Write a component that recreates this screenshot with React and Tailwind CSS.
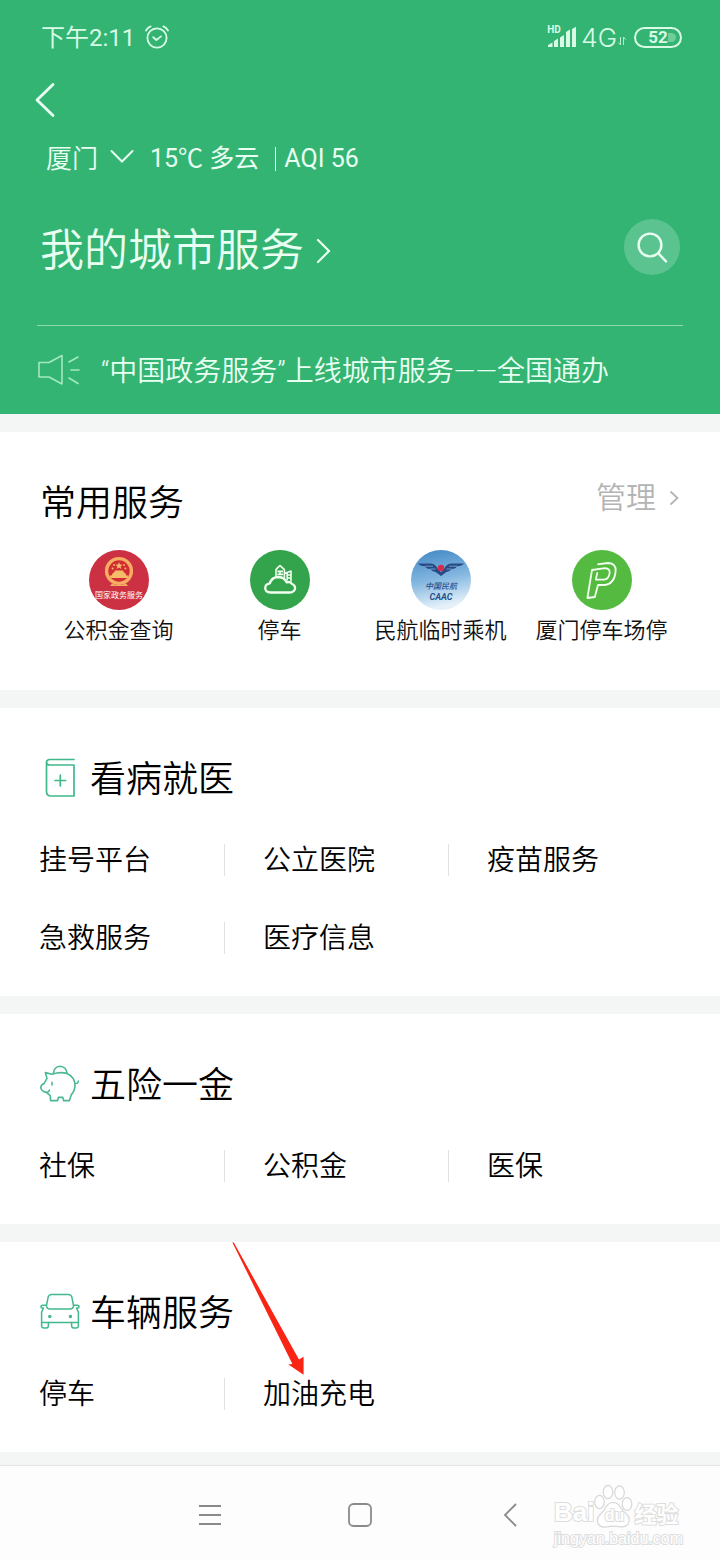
import React, { useState } from 'react';

const medical = ['挂号平台', '公立医院', '疫苗服务', '急救服务', '医疗信息'];
const insurance = ['社保', '公积金', '医保'];
const vehicle = ['停车', '加油充电'];

function AlarmIcon() {
  return (
    <svg className="w-6 h-6" viewBox="0 0 24 24" fill="none" stroke="currentColor" strokeWidth="1.8" strokeLinecap="round" strokeLinejoin="round">
      <circle cx="12" cy="13" r="9.6" />
      <path d="M1 5.5Q2.6 2.6 5.6 1.4M18.4 1.4Q21.4 2.6 23 5.5M8.2 12.2L11.4 15L16 11.4" />
    </svg>
  );
}

function StatusBar() {
  return (
    <div className="h-[74px] pl-[41px] pr-[38px] flex items-center justify-between text-[#d9fbe6]">
      <div className="flex items-center gap-[10px]">
        <span className="pt-[2px] text-[24px] leading-8 font-normal">下午2:11</span>
        <AlarmIcon />
      </div>
      <div className="flex items-center">
        <div className="relative w-[30px] h-6">
          <span className="absolute left-0 top-0 text-[10px] leading-[10px] font-bold">HD</span>
          <svg className="w-[30px] h-6" viewBox="0 0 30 24" fill="currentColor">
            <path d="M1 22V20L5.5 17.4V22ZM7 22V16L11 13.6V22ZM13 22V12.5L17 10V22ZM19 22V7L23 4.6V22ZM25 22V4L29 1.8V22Z" />
          </svg>
        </div>
        <span className="ml-1 pt-[2px] text-[26px] leading-8 font-['Inter'] font-light">4G</span>
        <svg className="ml-px mt-2 w-2 h-2" viewBox="0 0 8 8" fill="none" stroke="currentColor" strokeWidth="1" opacity="0.8">
          <path d="M2.5 0V8L0.5 5.5M5.5 8V0L7.5 2.5" />
        </svg>
        <div className="relative ml-2 w-12 h-[21px] rounded-full border-2 border-current flex items-center justify-center overflow-hidden">
          <span className="absolute left-8 top-1 bottom-1 right-1 rounded-r-full bg-[#d9fbe6]/35" />
          <span className="relative text-[17px] leading-5 font-bold">52</span>
        </div>
      </div>
    </div>
  );
}

function NationalBadge() {
  return (
    <svg className="w-[60px] h-[60px]" viewBox="0 0 60 60">
      <circle cx="30" cy="30" r="30" fill="#cb3142" />
      <circle cx="30" cy="21" r="12.4" fill="#d22c35" stroke="#f4ad62" strokeWidth="3.4" />
      <path d="M23 33.6Q30 36.6 37 33.6L39 36H21Z" fill="#f4ad62" />
      <path d="M20.6 25.4H39.4L38.4 28H21.6ZM24 22.8H36L37.4 25.4H22.6ZM26 20.6H34L35 22.8H25Z" fill="#f6bd68" />
      <path d="M30 12.2L31 14.6L33.6 14.8L31.6 16.4L32.3 19L30 17.6L27.7 19L28.4 16.4L26.4 14.8L29 14.6Z" fill="#f6bd68" />
      <circle cx="23.6" cy="18.6" r="1" fill="#f6bd68" />
      <circle cx="36.4" cy="18.6" r="1" fill="#f6bd68" />
      <circle cx="25" cy="15" r="0.9" fill="#f6bd68" />
      <circle cx="35" cy="15" r="0.9" fill="#f6bd68" />
      <text x="30" y="48" textAnchor="middle" fontSize="8" fontWeight="400" fill="#fff">国家政务服务</text>
    </svg>
  );
}

function CloudBadge() {
  return (
    <svg className="w-[60px] h-[60px]" viewBox="0 0 60 60" fill="none" stroke="#f1fff0" strokeWidth="2.3" strokeLinejoin="round">
      <circle cx="30" cy="30" r="30" fill="#33a44b" stroke="none" />
      <path d="M20.5 42.5Q15.2 42.2 15.2 38Q15.4 34 19.8 33.4Q21.6 27 28.6 27Q34.6 27.4 36.6 32.4Q40.4 31 42 34Q45.6 35.4 45 38.8Q44 42.4 40 42.5Z" />
      <path d="M26 26.6V19.6L28 17.4L30 15.6L32 17.4L34.4 19.6V27.8M27.4 21.4H33M27.4 24.4H33M30 21V25" strokeWidth="1.6" />
      <path d="M34.6 23.6L37 22.6M37.2 30.6V22.4L41 21V31.6M37.6 25H40.6M37.6 28H40.6" strokeWidth="1.6" />
    </svg>
  );
}

function CaacBadge() {
  return (
    <svg className="w-[60px] h-[60px]" viewBox="0 0 60 60">
      <defs>
        <linearGradient id="sky" x1="0" y1="0" x2="0.2" y2="1">
          <stop offset="0" stopColor="#3f86c4" />
          <stop offset="0.55" stopColor="#84b7e0" />
          <stop offset="1" stopColor="#e4f0fa" />
        </linearGradient>
      </defs>
      <circle cx="30" cy="30" r="30" fill="url(#sky)" />
      <path d="M7 13.4H20Q25 14 27 19.2L30 22.2L33 19.2Q35 14 40 13.4H53Q51 16 46 16.2Q45 18.6 40.6 19Q39 21.6 35.4 22L30 26L24.6 22Q21 21.6 19.4 19Q15 18.6 14 16.2Q9 16 7 13.4Z" fill="#294b84" />
      <path d="M14 16.2H22M19.4 19H24.6M46 16.2H38M40.6 19H35.4" stroke="#7fb0dc" strokeWidth="0.8" />
      <circle cx="30" cy="18" r="3.2" fill="#d62b4c" />
      <text x="30" y="39" textAnchor="middle" fontSize="8" fontStyle="italic" fontWeight="500" fill="#28508c">中国民航</text>
      <text x="30" y="50" textAnchor="middle" fontSize="9" fontStyle="italic" fontWeight="700" fill="#28508c">CAAC</text>
    </svg>
  );
}

function ParkingBadge() {
  return (
    <svg className="w-[60px] h-[60px]" viewBox="0 0 60 60" fill="none" stroke="#f3fff0" strokeWidth="1.8" strokeLinejoin="round">
      <circle cx="30" cy="30" r="30" fill="#54bb40" stroke="none" />
      <path d="M25.4 14.4L36 13Q44.6 13.4 43.6 21.4Q42.6 33.6 33 35H26L22.8 47L15.4 48L20 20L33 18.2Q38.4 18.6 37.6 23.4Q36.6 29.4 32 29.6H23.8L25.4 22.4" />
    </svg>
  );
}

const common = [
  { label: '公积金查询', Icon: NationalBadge },
  { label: '停车', Icon: CloudBadge },
  { label: '民航临时乘机', Icon: CaacBadge },
  { label: '厦门停车场停', Icon: ParkingBadge },
];

function BookIcon() {
  return (
    <svg className="w-10 h-10" viewBox="0 0 40 40" fill="none" stroke="#3fb98a" strokeWidth="1.7" strokeLinecap="round" strokeLinejoin="round">
      <path d="M34 1.5H10Q6.5 1.5 6.5 4.2Q6.5 7 10 7H34V38H11Q6.5 38 6.5 33.6V4.2M15 22.5H25.6M20.3 17.2V27.8" />
    </svg>
  );
}

function PiggyIcon() {
  return (
    <svg className="w-10 h-10" viewBox="0 0 40 40" fill="none" stroke="#4bb893" strokeWidth="1.6" strokeLinecap="round" strokeLinejoin="round">
      <path d="M13.4 9.4Q14 2.6 20 2.2Q26.4 2.6 27 9.4" />
      <path d="M5.4 8.6L12 10.2Q20 7.6 27 9.4Q35 13 35 21.4Q34.8 27 31.4 30.6L29.4 36.6H23.6L22.8 33.4H18.4L17.6 36.6H10.6L10.2 31.6L6.4 28.4Q1.4 27.4 0.8 23.6Q1 20.8 4 19.6L7 14.4Z" />
      <path d="M34.8 19.2Q38 20.2 38.4 17M6 28.2Q9 28.6 9.4 26M12 18.4V21" />
    </svg>
  );
}

function CarIcon() {
  return (
    <svg className="w-10 h-10" viewBox="0 0 40 40" fill="none" stroke="#41b98c" strokeWidth="1.5" strokeLinecap="round" strokeLinejoin="round">
      <path d="M11.4 2.6H28.6Q31 2.8 31.8 4.8L33.6 14Q33.2 17 30 17H10Q6.8 17 6.4 14L8.2 4.8Q9 2.8 11.4 2.6Z" />
      <path d="M6 13.2H2.6Q0.8 13.4 1 15.2Q1.4 16.4 3.4 16L1.6 20.4V30.4H38.4V20.4L36.6 16Q38.6 16.4 39 15.2Q39.2 13.4 37.4 13.2H34" />
      <path d="M1.6 30.4V34Q1.8 36 4 36H6.4Q8.4 35.8 8.4 33.8V30.4M31.6 30.4V33.8Q31.6 35.8 33.6 36H36Q38.2 36 38.4 34V30.4" />
      <circle cx="9.8" cy="24.4" r="1" fill="#41b98c" />
      <circle cx="30.4" cy="24.4" r="1" fill="#41b98c" />
    </svg>
  );
}

function ServiceSection({ title, icon, items, children }) {
  return (
    <section className="relative bg-white pt-[50px] pb-[19px]">
      <h2 className="pl-10 h-10 flex items-center gap-[10px] text-[36px] leading-10 text-black">
        {icon}
        <span className="pt-1">{title}</span>
      </h2>
      <ul className="mt-[23px] pr-12 grid grid-cols-3">
        {items.map((item, i) => (
          <li key={item} className="relative h-[78px] flex items-center">
            <a href="#" className="pl-[39px] pt-[2px] text-[28px] leading-10 text-black">{item}</a>
            {i % 3 !== 2 && !(i === items.length - 1) && (
              <span className="absolute -right-px w-px h-8 bg-[#e2e2e2]" />
            )}
          </li>
        ))}
      </ul>
      {children}
    </section>
  );
}

function Watermark() {
  return (
    <div className="absolute right-[38px] top-4 w-32 text-white select-none whitespace-nowrap [paint-order:stroke_fill] [-webkit-text-stroke:2px_#dedede] font-['Liberation_Sans',sans-serif]">
      <div className="h-12 flex items-end font-bold text-[26px] leading-9">
        <span>Bai</span>
        <div className="relative w-10 h-12 shrink-0">
          <svg className="w-10 h-12 [paint-order:normal]" viewBox="0 0 40 48" fill="#fff" stroke="#d8d8d8" strokeWidth="1.2">
            <ellipse cx="5.5" cy="20" rx="4.8" ry="6.6" />
            <ellipse cx="14" cy="10" rx="4.8" ry="6.6" />
            <ellipse cx="25.5" cy="10.5" rx="4.8" ry="6.6" />
            <ellipse cx="33" cy="22" rx="4.8" ry="6.4" />
            <path d="M19 20.5Q24 20.5 26.5 25.5Q29 29.5 33 32.5Q37 37 34 42Q31 46 25 44.6Q19 43.4 13 44.8Q6 46 4 41.6Q2 36 6.6 32Q10 29 12 25Q14.6 20.6 19 20.5Z" />
          </svg>
          <span className="absolute inset-x-0 bottom-1 text-center text-[16px] leading-5">du</span>
        </div>
        <span className="font-['Noto_Sans_CJK_SC',sans-serif] text-[22px]">经验</span>
      </div>
      <div className="text-[16px] leading-[18px] font-normal">jingyan.baidu.com</div>
    </div>
  );
}

export default function App() {
  const [cityOpen, setCityOpen] = useState(false);

  return (
    <div className="min-h-screen bg-[#f4f5f5] font-['Roboto','Noto_Sans_CJK_SC',sans-serif] font-[350]" lang="zh-CN">
      <header className="bg-[#33b473] text-[#e9fff1]">
        <StatusBar />

        <div className="h-[52px] pl-[35px] flex items-center">
          <button aria-label="返回">
            <svg className="w-5 h-9" viewBox="0 0 20 36" fill="none" stroke="currentColor" strokeWidth="2.8" strokeLinecap="round" strokeLinejoin="round">
              <path d="M18 2.5L2 18L18 33.5" />
            </svg>
          </button>
        </div>

        <div className="h-[66px] pl-[46px] flex items-center text-[26px] leading-8">
          <button className="flex items-center gap-3" aria-expanded={cityOpen} onClick={() => setCityOpen(!cityOpen)}>
            <span>厦门</span>
            <svg className="mb-1 w-6 h-4" viewBox="0 0 24 16" fill="none" stroke="currentColor" strokeWidth="2" strokeLinecap="round">
              <path d="M1.5 2L12 12.5L22.5 2" />
            </svg>
          </button>
          <span className="ml-4 text-[25px] font-normal">15℃ 多云</span>
          <span className="ml-4 mr-2 w-px h-6 bg-current" />
          <span className="text-[25px] font-normal">AQI 56</span>
        </div>

        <div className="h-[110px] px-10 flex items-center justify-between">
          <a href="#" className="flex items-center gap-3">
            <h1 className="pt-2 text-[44px] leading-[56px]">我的城市服务</h1>
            <svg className="mt-2 w-4 h-7" viewBox="0 0 16 28" fill="none" stroke="currentColor" strokeWidth="2.2" strokeLinecap="round">
              <path d="M2 3L13 14L2 25" />
            </svg>
          </a>
          <button aria-label="搜索" className="w-14 h-14 rounded-full bg-white/20 flex items-center justify-center">
            <svg className="w-8 h-8" viewBox="0 0 32 32" fill="none" stroke="currentColor" strokeWidth="2.4" strokeLinecap="round">
              <circle cx="14" cy="14" r="11.4" />
              <path d="M22.4 22.4L30 30.4" />
            </svg>
          </button>
        </div>

        <a href="#" className="mt-[23px] mx-[37px] h-[89px] border-t border-[#8fd9b1] flex items-center gap-5 text-[28px] leading-10">
          <svg className="w-11 h-8 shrink-0" viewBox="0 0 44 32" fill="none" stroke="#a4e8c1" strokeWidth="1.6" strokeLinecap="round" strokeLinejoin="round">
            <path d="M2 8.5H12L25 1.5V30L12 23H2ZM32 8L41 3M34 16H42M32 24L41 29.5" />
          </svg>
          <span className="pt-1">“中国政务服务”上线城市服务——全国通办</span>
        </a>
      </header>

      <main className="mt-[18px] flex flex-col gap-[18px]">
        <section className="bg-white pt-[50px] pb-[43px]">
          <div className="pl-10 pr-10 h-10 flex items-start justify-between">
            <h2 className="pt-[2px] text-[36px] leading-10 text-black">常用服务</h2>
            <button className="flex items-center gap-3 text-[30px] leading-8 text-[#b4b4b4]">
              管理
              <svg className="w-3 h-4" viewBox="0 0 12 16" fill="none" stroke="currentColor" strokeWidth="1.8" strokeLinecap="round">
                <path d="M3 2L9.5 8L3 14" />
              </svg>
            </button>
          </div>
          <ul className="mt-7 px-[38px] grid grid-cols-4">
            {common.map(({ label, Icon }) => (
              <li key={label}>
                <a href="#" className="flex flex-col items-center gap-[5px] whitespace-nowrap text-[22px] leading-8 text-[#111]">
                  <Icon />
                  {label}
                </a>
              </li>
            ))}
          </ul>
        </section>

        <ServiceSection title="看病就医" icon={<BookIcon />} items={medical} />
        <ServiceSection title="五险一金" icon={<PiggyIcon />} items={insurance} />
        <ServiceSection title="车辆服务" icon={<CarIcon />} items={vehicle}>
          {/* red pointer to the charging entry */}
          <svg className="absolute left-[232px] top-0 w-[73px] h-[134px] pointer-events-none" viewBox="0 0 73 134" fill="#fa2414">
            <path d="M0.4 0.4L1.8 0.4L67 117.6L71.6 114.8V132.8L56.4 122.4L60.4 122Z" />
          </svg>
        </ServiceSection>
      </main>

      <nav className="relative mt-[13px] h-[95px] border-t border-[#e4e6e6] bg-[#fdfdfd] pt-1 flex items-center justify-center gap-[126px] text-[#8a8a8a]">
        <button aria-label="菜单">
          <svg className="w-6 h-6" viewBox="0 0 24 24" stroke="currentColor" strokeWidth="1.8">
            <path d="M1 3H23M1 12H23M1 21H23" />
          </svg>
        </button>
        <button aria-label="主页">
          <svg className="w-6 h-6" viewBox="0 0 24 24" fill="none" stroke="currentColor" strokeWidth="1.8">
            <rect x="1" y="1" width="22" height="22" rx="4.5" />
          </svg>
        </button>
        <button aria-label="返回上一页">
          <svg className="w-6 h-6" viewBox="0 0 24 24" fill="none" stroke="currentColor" strokeWidth="1.8">
            <path d="M18 1L7 12L18 23" />
          </svg>
        </button>
        <Watermark />
      </nav>
    </div>
  );
}
